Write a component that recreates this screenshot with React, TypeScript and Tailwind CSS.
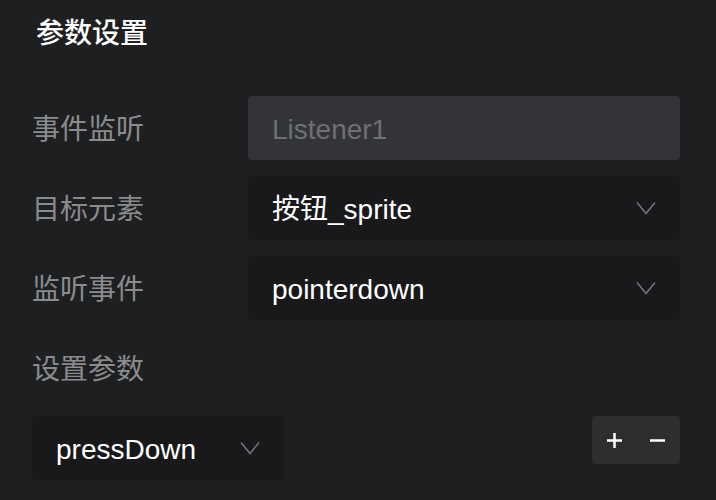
const Chevron = () => (
  <svg width="20" height="14" viewBox="0 0 20 14" fill="none">
    <polyline points="1,1.5 10,12.5 19,1.5" stroke="#76777a" strokeWidth="1.5" />
  </svg>
);

const Select = ({ value, className }: { value: string; className?: string }) => (
  <div
    className={`flex h-16 items-center justify-between rounded bg-[#19191b] pl-6 pr-6 text-[28px] text-white ${className ?? ""}`}
  >
    <span className="pt-1">{value}</span>
    <Chevron />
  </div>
);

const Row = ({ label, children }: { label: string; children: React.ReactNode }) => (
  <div className="flex h-16 items-center">
    <div className="w-[216px] pt-1 text-[28px] text-[#8b8b8d]">{label}</div>
    <div className="w-[432px]">{children}</div>
  </div>
);

export default function App() {
  return (
    <div
      className="flex h-[500px] w-[716px] overflow-hidden bg-[#1e1f21]"
      style={{ fontFamily: '"Liberation Sans", "Noto Sans CJK SC", sans-serif' }}
    >
      <div className="flex w-[680px] flex-col pl-8">
        <div className="flex h-16 items-center pl-1 pt-1 text-[28px] font-medium text-white">参数设置</div>

        <div className="mt-8 flex flex-col gap-4">
          <Row label="事件监听">
            <div className="flex h-16 items-center rounded bg-[#333437] pl-6 pt-1 text-[28px] text-[#6f7072]">
              Listener1
            </div>
          </Row>
          <Row label="目标元素">
            <Select value="按钮_sprite" />
          </Row>
          <Row label="监听事件">
            <Select value="pointerdown" />
          </Row>
          <div className="flex h-16 items-center pt-1 text-[28px] text-[#8b8b8d]">设置参数</div>
          <div className="flex items-start justify-between">
            <Select value="pressDown" className="w-[252px]" />
            <div className="flex h-12 w-[88px] items-center justify-between rounded bg-[#2e2e31] px-[15px]">
              <svg width="15" height="15" viewBox="0 0 15 15">
                <path d="M0 7.5H15M7.5 0V15" stroke="#ffffff" strokeWidth="2.5" />
              </svg>
              <svg width="15" height="15" viewBox="0 0 15 15">
                <path d="M0 7.5H15" stroke="#ffffff" strokeWidth="2.5" />
              </svg>
            </div>
          </div>
        </div>
      </div>
      <div className="flex-1 bg-[#1d1e20]" />
    </div>
  );
}
